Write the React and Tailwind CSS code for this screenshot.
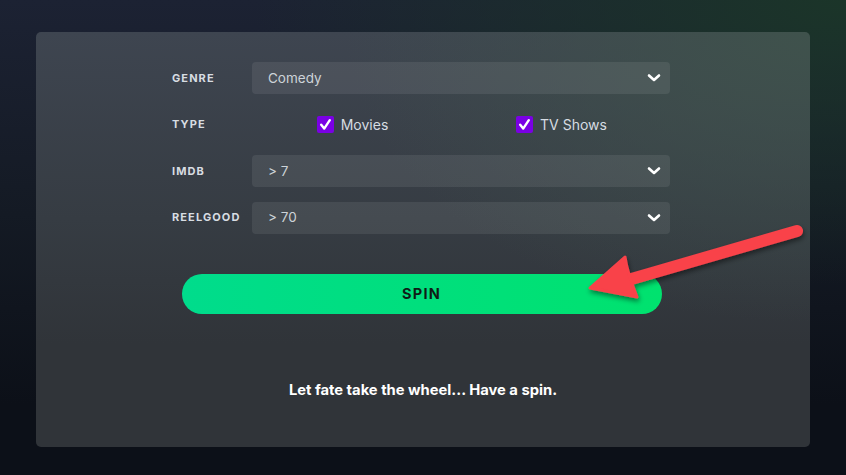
import React from "react";

function Chevron() {
  return (
    <svg width="14" height="10" viewBox="0 0 14 10" className="shrink-0">
      <path d="M2 2.5 L7 7 L12 2.5" fill="none" stroke="#ffffff" strokeWidth="2.6" strokeLinecap="round" strokeLinejoin="round" />
    </svg>
  );
}

function Select({ value }) {
  return (
    <div className="flex h-8 items-center justify-between rounded-[4px] bg-white/[0.08] pl-4 pr-[9px]">
      <span className="text-[13.5px] text-[#cdd3d8]">{value}</span>
      <Chevron />
    </div>
  );
}

function Check({ label }) {
  return (
    <div className="flex items-center gap-[7px]">
      <div className="flex h-[17px] w-[17px] items-center justify-center rounded-[2px] bg-[#7a00e4]">
        <svg width="13" height="13" viewBox="0 0 13 13">
          <path d="M2.2 6.8 L5.2 10.6 L10.8 2.2" fill="none" stroke="#ffffff" strokeWidth="2.4" strokeLinecap="round" strokeLinejoin="round" />
        </svg>
      </div>
      <span className="text-[14px] text-[#d6dce2]">{label}</span>
    </div>
  );
}

function Label({ children }) {
  return (
    <div className="w-[80px] shrink-0 text-[11px] font-bold tracking-[1.1px] text-[#d8dde2]">{children}</div>
  );
}

export default function App() {
  return (
    <div
      className="relative h-[475px] w-[846px] overflow-hidden bg-[radial-gradient(ellipse_70%_60%_at_100%_0%,#1b3529_0%,transparent_100%),linear-gradient(180deg,#1c2233_0%,#141a24_45%,#0c1018_85%)] pt-8 pl-9"
      style={{ fontFamily: "Inter, 'Open Sans', sans-serif" }}
    >
      <div className="flex h-[415px] w-[774px] flex-col items-center rounded-[5px] bg-[radial-gradient(ellipse_60%_70%_at_100%_0%,#3f524c_0%,transparent_100%),linear-gradient(180deg,#3e4550_0%,#363c43_45%,#303439_75%,#303439_100%)] pt-[30px]">
        <div className="ml-[-4px] flex w-[498px] flex-col gap-[14.5px]">
          <div className="flex items-center">
            <Label>GENRE</Label>
            <div className="flex-1"><Select value="Comedy" /></div>
          </div>
          <div className="flex h-8 items-center">
            <Label>TYPE</Label>
            <div className="grid flex-1 grid-cols-2 justify-items-center">
              <div className="pr-[8px]"><Check label="Movies" /></div>
              <div className="pr-[8px]"><Check label="TV Shows" /></div>
            </div>
          </div>
          <div className="flex items-center">
            <Label>IMDB</Label>
            <div className="flex-1"><Select value="> 7" /></div>
          </div>
          <div className="flex items-center">
            <Label>REELGOOD</Label>
            <div className="flex-1"><Select value="> 70" /></div>
          </div>
        </div>
        <button className="mt-10 ml-[-3px] flex h-10 w-[480px] items-center justify-center rounded-full bg-[linear-gradient(90deg,#00dc8c,#00e26e)] text-[14.5px] font-bold tracking-[1.3px] text-[#0f1c16]">
          SPIN
        </button>
        <div className="mt-[65px] text-[14.75px] font-bold text-white">Let fate take the wheel... Have a spin.</div>
      </div>

      <svg className="pointer-events-none absolute left-0 top-0" width="846" height="475" viewBox="0 0 846 475">
        <defs>
          <filter id="sh" x="-20%" y="-20%" width="140%" height="140%">
            <feDropShadow dx="1" dy="3" stdDeviation="2.5" floodColor="#000" floodOpacity="0.45" />
          </filter>
        </defs>
        <g filter="url(#sh)" fill="#f9424a">
          <line x1="797" y1="231" x2="628" y2="280" stroke="#f9424a" strokeWidth="12" strokeLinecap="round" />
          <path d="M590 288 L625 257 Q627 272 637 297 Z" stroke="#f9424a" strokeWidth="3" strokeLinejoin="round" />
        </g>
      </svg>
    </div>
  );
}
